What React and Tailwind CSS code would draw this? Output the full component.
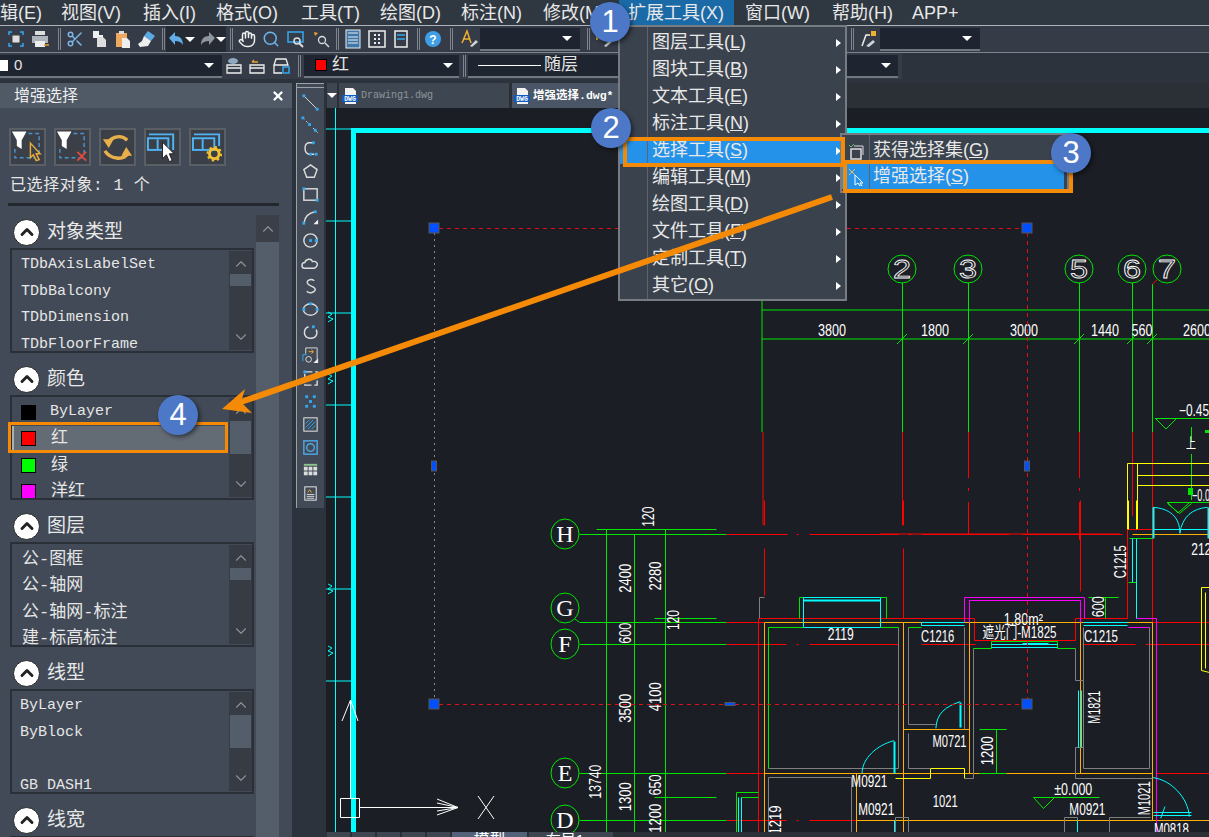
import React from 'react';
import { Scissors, Hand, Search, ChevronUp, ChevronDown, X } from 'lucide-react';

const BLUE = '#35a9f0';
const RED = '#ff0000';
const GREEN = '#00e600';
const ORANGE = '#ffb000';
const GRAY = '#808080';
const CYAN = '#00ffff';
const PINK = '#ff00ff';
const YELLOW = '#ffff00';

// drawing coords were read off a crop, map them back to page coords
const zx = (x) => 540 + x / 2.344;
const zy = (y) => 500 + y / 3;

const menus = [
    ['辑(E)', 'ml-0'], ['视图(V)', 'ml-[19px]'], ['插入(I)', 'ml-[22px]'], ['格式(O)', 'ml-[20px]'],
    ['工具(T)', 'ml-[23px]'], ['绘图(D)', 'ml-[20px]'], ['标注(N)', 'ml-[20px]'], ['修改(M)', 'ml-[21px]'],
];

const toolItems = ['图层工具', '图块工具', '文本工具', '标注工具', '选择工具', '编辑工具', '绘图工具', '文件工具', '定制工具', '其它'];
const toolKeys = ['L', 'B', 'E', 'N', 'S', 'M', 'D', 'F', 'T', 'O'];

const segs = [
    // red axis lines
    [RED, [[437, 103], [578, 103]]], [RED, [[600, 103], [605, 103]]], [RED, [[630, 103], [840, 103]]], [RED, [[862, 103], [870, 103]]],
    [RED, [[893, 103], [1100, 103]]], [RED, [[1130, 103], [1365, 103]]],
    [RED, [[437, 367], [1568, 367]]],
    [RED, [[437, 433], [577, 433]]], [RED, [[600, 433], [605, 433]]], [RED, [[630, 433], [840, 433]]], [RED, [[893, 433], [1020, 433]]],
    [RED, [[1270, 433], [1395, 433]]], [RED, [[1418, 433], [1568, 433]]],
    [RED, [[437, 820], [524, 820]]], [RED, [[1445, 820], [1568, 820]]],
    [RED, [[437, 961], [577, 961]]], [RED, [[600, 961], [605, 961]]], [RED, [[630, 961], [740, 961]]],
    [RED, [[524, 0], [524, 75]]], [RED, [[524, 143], [524, 285]]],
    [RED, [[850, 0], [850, 75]]], [RED, [[850, 145], [850, 355]]],
    [RED, [[1265, 0], [1265, 272]]], [RED, [[1435, 88], [1435, 367]]],
    [RED, [[512, 995], [512, 355], [1017, 355], [1017, 421], [1253, 421], [1253, 355], [1377, 355], [1377, 88], [1568, 88]]],
    // orange walls
    [ORANGE, [[524, 367], [1435, 367]]], [ORANGE, [[524, 367], [524, 995]]], [ORANGE, [[850, 367], [850, 995]]],
    [ORANGE, [[524, 820], [1435, 820]]], [ORANGE, [[740, 961], [1568, 961]]], [ORANGE, [[740, 820], [740, 995]]],
    [ORANGE, [[1435, 367], [1435, 961]]], [ORANGE, [[1265, 367], [1265, 820]]], [ORANGE, [[1005, 367], [1005, 820]]],
    [ORANGE, [[850, 688], [1005, 688]]], [ORANGE, [[1388, 103], [1568, 103]]],
    [YELLOW, [[831, 833], [913, 833], [913, 805], [995, 805], [995, 833]]],
    [YELLOW, [[1378, 0], [1378, 88]]], [YELLOW, [[1398, 0], [1398, 88]]],
    [YELLOW, [[1568, 260], [1550, 260], [1550, 510], [1568, 515]]], [YELLOW, [[1558, 275], [1558, 505]]],
    // gray inner lines
    [GRAY, [[840, 380], [840, 805], [534, 805]]], [GRAY, [[862, 380], [862, 673], [925, 673]]], [GRAY, [[862, 700], [862, 805], [913, 805]]],
    [GRAY, [[995, 380], [995, 688]]], [GRAY, [[1016, 445], [1016, 833], [995, 833]]],
    [GRAY, [[1253, 445], [1253, 540], [1273, 540], [1273, 380]]], [GRAY, [[1273, 740], [1253, 740], [1253, 833], [1435, 833]]],
    [GRAY, [[1273, 540], [1273, 805], [1427, 805], [1427, 380]]],
    [GRAY, [[524, 290], [513, 290], [513, 355]]], [GRAY, [[534, 995], [534, 832], [728, 832], [728, 995]]],
    [GRAY, [[1228, 995], [1228, 950], [1258, 950], [1258, 995]]], [GRAY, [[1334, 995], [1334, 950], [1430, 950]]],
    [GRAY, [[831, 995], [831, 950], [862, 950], [862, 995]]],
    // magenta
    [PINK, [[995, 367], [995, 290], [1275, 290], [1275, 355]]], [PINK, [[1005, 367], [1005, 301], [1265, 301], [1265, 367]]],
    [PINK, [[1378, 380], [1427, 380]]], [PINK, [[1398, 355], [1445, 355], [1445, 995]]],
    // green parts near windows
    [GREEN, [[608, 355], [608, 290], [810, 290], [810, 355]]], [GREEN, [[534, 805], [534, 380], [617, 380]]], [GREEN, [[798, 380], [840, 380]]],
    [GREEN, [[862, 380], [892, 380]]], [GREEN, [[1016, 445], [1056, 445], [1056, 423], [1213, 423], [1213, 445], [1253, 445]]],
    [GREEN, [[460, 995], [460, 877], [510, 877]]], [GREEN, [[472, 892], [510, 892]]], [GREEN, [[1380, 115], [1435, 115]]],
    [GREEN, [[1378, 247], [1398, 247]]], [GREEN, [[1030, 688], [1092, 688]]], [GREEN, [[1070, 688], [1070, 820]]], [GREEN, [[1030, 820], [1092, 820]]],
    [GREEN, [[1285, 290], [1355, 290]]], [GREEN, [[1325, 290], [1325, 355]]],
    [GREEN, [[1155, 892], [1310, 892]]], [GREEN, [[1155, 892], [1180, 925], [1205, 892]]], [GREEN, [[1470, 8], [1497, 40], [1525, 8]]],
    // cyan windows and doors
    [CYAN, [[617, 380], [617, 290], [798, 290], [798, 380], [617, 380]]], [CYAN, [[617, 300], [798, 300]], 2],
    [CYAN, [[892, 365], [995, 365]]], [CYAN, [[892, 376], [995, 376]]], [CYAN, [[892, 365], [892, 376]]],
    [CYAN, [[1273, 365], [1377, 365]]], [CYAN, [[1273, 376], [1377, 376]]],
    [CYAN, [[1056, 433], [1213, 433]]], [CYAN, [[1056, 440], [1213, 440]]], [CYAN, [[1130, 428], [1190, 428]]],
    [CYAN, [[985, 605], [985, 680]], 2], [CYAN, [[830, 722], [830, 820]], 2], [CYAN, [[1262, 570], [1262, 740]]], [CYAN, [[1268, 570], [1268, 740]]],
    [CYAN, [[463, 892], [463, 995]]], [CYAN, [[472, 892], [472, 995]]], [CYAN, [[1388, 115], [1388, 247]]], [CYAN, [[1398, 115], [1398, 355]]],
    [CYAN, [[1437, 22], [1437, 115]], 2], [CYAN, [[1565, 22], [1565, 115]], 2], [CYAN, [[1437, 88], [1568, 88]]],
    [CYAN, [[1437, 936], [1525, 936]]], [CYAN, [[1437, 945], [1525, 945]]], [CYAN, [[830, 961], [830, 995]]], [CYAN, [[1258, 961], [1258, 995]]],
    // left dimension lines
    [GREEN, [[92, 103], [437, 103]]], [GREEN, [[92, 367], [437, 367]]], [GREEN, [[92, 433], [437, 433]]], [GREEN, [[92, 820], [437, 820]]], [GREEN, [[92, 961], [437, 961]]],
    [GREEN, [[154, 88], [154, 995]]], [GREEN, [[221, 103], [221, 995]]], [GREEN, [[292, 88], [292, 995]]],
    [GREEN, [[132, 88], [412, 88]]], [GREEN, [[268, 355], [412, 355]]], [GREEN, [[268, 892], [412, 892]]],
];

const arcs = [
    'M985 605 C950 620 930 640 928 685',
    'M830 722 C790 735 755 775 755 820',
    'M1437 833 C1480 840 1520 895 1522 950',
    'M1437 22 C1475 25 1500 50 1500 100 C1505 50 1530 25 1565 22',
    'M1465 920 L1455 955',
];

const cadTexts = [
    ['2119', 705, 402, 26], ['C1216', 932, 410, 33], ['1.80m²', 1133, 357, 39], ['遮光门-M1825', 1124, 397, 74], ['C1215', 1315, 408, 34],
    ['M0721', 960, 723, 34], ['M0921', 772, 843, 36], ['M0921', 788, 927, 36], ['1021', 950, 905, 25], ['±0.000', 1250, 868, 38],
    ['M0921', 1283, 927, 36], ['212', 1550, 148, 20], ['M0818', 1480, 988, 35],
    ['120', 255, 50, 20, 1], ['2400', 200, 235, 29, 1], ['2280', 270, 228, 29, 1], ['120', 313, 360, 20, 1], ['600', 200, 400, 21, 1],
    ['3500', 200, 625, 29, 1], ['4100', 270, 590, 29, 1], ['13740', 130, 845, 34, 1], ['1300', 200, 890, 29, 1], ['650', 270, 855, 21, 1],
    ['1200', 270, 955, 29, 1], ['1200', 1048, 752, 29, 1], ['M1821', 1300, 622, 33, 1], ['M1021', 1417, 895, 34, 1], ['1219', 552, 960, 29, 1],
    ['600', 1310, 320, 21, 1], ['C1215', 1360, 185, 33, 1],
];

const topAxes = [['2', 902, 902], ['3', 968, 968], ['5', 1079, 1079], ['6', 1132, 1132], ['7', 1167, 1152]];
const sideAxes = [['H', 534], ['G', 608], ['F', 644], ['E', 773], ['D', 820]];

const Cad = ({ x, y, w, rot, size = 16, children }) => (
    <text
        x={x}
        y={y}
        fill="#fff"
        fontSize={size}
        textAnchor="middle"
        dominantBaseline="central"
        textLength={w}
        lengthAdjust="spacingAndGlyphs"
        transform={rot ? `rotate(-90 ${x} ${y})` : undefined}
    >
        {children}
    </text>
);

const Grip = ({ x, y, w = 10, h = 10 }) => (
    <rect x={x - w / 2} y={y - h / 2} width={w} height={h} fill="#0050ff" stroke="#555" strokeWidth="1" />
);

const Drawing = () => (
    <svg viewBox="326 108 883 724" className="block h-[724px] w-[883px]" fontFamily="'Liberation Sans','Noto Sans CJK SC',sans-serif">
        {/* frame and left ruler */}
        {[129, 221, 313, 405, 497, 589, 681].map((y) => (
            <line key={y} x1="326" x2="351" y1={y} y2={y} stroke={CYAN} />
        ))}
        <line x1="335.5" x2="335.5" y1="108" y2="832" stroke={CYAN} />
        <path d="M353.5 832V130.5H1209" fill="none" stroke={CYAN} strokeWidth="5" />
        {[318, 380, 590, 652].map((y) => (
            <path key={y} d={`M328 ${y - 6}l4 2-4 3 5 2-5 3`} fill="none" stroke={CYAN} />
        ))}

        {/* top axes */}
        <path d="M762 298V432M762 310H1209M762 339H1209" stroke={GREEN} fill="none" />
        <path d="M763 432V525" stroke={RED} fill="none" />
        {topAxes.map(([label, cx, lx]) => (
            <g key={label}>
                <circle cx={cx} cy="269" r="14" fill="none" stroke={GREEN} />
                <path d={`M${lx + 0.5} ${lx === 1152 ? 284 : 283}V432`} stroke={GREEN} fill="none" />
                <path d={`M${lx - 5} 344l10-10`} stroke={GREEN} fill="none" />
                <text
                    x={cx}
                    y={269}
                    fontSize="26"
                    textAnchor="middle"
                    dominantBaseline="central"
                    textLength="18"
                    lengthAdjust="spacingAndGlyphs"
                    fill="none"
                    stroke="#fff"
                    strokeWidth="0.8"
                >
                    {label}
                </text>
            </g>
        ))}
        <path d="M1152.500 284L1157 280M902.500 432V525M968.500 432V478M968.500 488V491M968.500 502V535M1079.500 432V478M1079.500 488V491M1079.500 502V540M1132.500 432V516M1152.500 432V530" stroke={RED} fill="none" />
        <path d="M880 534H1120" stroke={RED} />
        {[['3800', 832, 28], ['1800', 935, 28], ['3000', 1024, 28], ['1440', 1105, 28], ['560', 1142, 21], ['2600', 1197, 28]].map(([t, x, w]) => (
            <Cad key={t} x={x} y={330} w={w}>{t}</Cad>
        ))}

        {/* upper right details */}
        <path d="M1155 418.500H1209M1155 418L1166 429L1177 418M1191.500 427V442M1191.500 454V500M1167 502.500H1209M1167 502L1178 513L1190 502" stroke={GREEN} fill="none" />
        <rect x="1188" y="488" width="5" height="7" fill={GREEN} />
        <rect x="1205" y="430" width="4" height="3" fill={GREEN} />
        <Cad x={1194} y={410} w={30}>−0.45</Cad>
        <Cad x={1191} y={443} w={10} size={14}>上</Cad>
        <Cad x={1201} y={495} w={18}>−0.0</Cad>
        <path d="M1127.500 529V463.500H1209M1137.500 463V529M1137 475.500H1209M1137 485.500H1209M1127 529.500H1153" stroke={YELLOW} fill="none" />

        {/* building plan */}
        {segs.map(([color, pts, width], i) => (
            <polyline
                key={i}
                points={pts.map(([x, y]) => `${Math.round(zx(x)) + 0.5},${Math.round(zy(y)) + 0.5}`).join(' ')}
                fill="none"
                stroke={color}
                strokeWidth={width || 1}
            />
        ))}
        <g transform="translate(540 500) scale(0.4266 0.3333)">
            {arcs.map((d) => (
                <path key={d} d={d} fill="none" stroke={CYAN} strokeWidth="1" vectorEffect="non-scaling-stroke" />
            ))}
        </g>
        {cadTexts.map(([t, x, y, w, rot], i) => (
            <Cad key={i} x={zx(x)} y={zy(y)} w={w} rot={rot}>{t}</Cad>
        ))}

        {/* side axes */}
        {sideAxes.map(([label, y]) => (
            <g key={label}>
                <ellipse cx="565" cy={y} rx="14" ry="15" fill="#1b1e24" stroke={GREEN} />
                <text x="565" y={y} fill="#fff" fontSize="24" textAnchor="middle" dominantBaseline="central" fontFamily="'Liberation Serif',serif">{label}</text>
            </g>
        ))}
        <path d="M575 619L579 622" stroke={GREEN} />

        {/* selection grips */}
        <path d="M439 228.500H1022M439 704.500H1022M1027.500 233V700" stroke="#e01010" strokeDasharray="4 4" fill="none" />
        <path d="M434.500 233V700" stroke="#8a8a8a" strokeDasharray="2 4" fill="none" />
        <Grip x={434} y={228} /><Grip x={1027} y={228} /><Grip x={434} y={704} /><Grip x={1027} y={704} />
        <Grip x={434} y={466} w={5} h={10} /><Grip x={1027} y={466} w={5} h={10} /><Grip x={730} y={704} w={10} h={3} />

        {/* ucs icon */}
        <path d="M350.500 798V700M342 721L350.500 700L358 721M340.500 798.500H359.500V817.500H340.500ZM360 807.500H458M437 799L458 807.500L437 815M437 803L458 807.500L437 811M478 796L494 819M494 796L478 819" stroke="#fff" fill="none" />
    </svg>
);

const ToolIcon = ({ children, className = 'mx-[1px]' }) => (
    <div className={`flex h-[22px] w-[22px] items-center justify-center ${className}`}>
        <svg viewBox="0 0 20 20" className="h-[20px] w-[20px]" fill="none">{children}</svg>
    </div>
);

const Sep = ({ className = 'mx-[3px]' }) => (
    <div className={`h-[22px] w-[3px] border-x border-[#7d848d] ${className}`} />
);

const Caret = ({ className = '' }) => (
    <span className={`h-0 w-0 border-x-[5px] border-t-[5px] border-x-transparent border-t-white ${className}`} />
);

const Combo = ({ className, children }) => (
    <div className={`flex h-[23px] items-center border-b-2 border-[#70777f] bg-[#1f2530] ${className}`}>
        {children}
    </div>
);

const ToolbarOne = () => (
    <div className="flex h-[27px] border-b border-[#7d848d] bg-[#353c47] pl-[4px]">
        <div className="flex w-[983px] items-center">
            <ToolIcon><path d="M3 6V3h3M14 3h3v3M17 14v3h-3M6 17H3v-3" stroke={BLUE} strokeWidth="1.500" /><rect x="6.500" y="6.500" width="7" height="7" fill="#ddd" /></ToolIcon>
            <ToolIcon><rect x="5" y="2" width="10" height="4" fill="#ddd" /><rect x="2" y="7" width="16" height="7" fill="#aeb4bb" /><rect x="5" y="12" width="10" height="6" fill="#eee" /><path d="M14 16h5" stroke="#f0a030" strokeWidth="1.500" /></ToolIcon>
            <Sep className="ml-[6px] mr-[2px]" />
            <div className="mx-[1px] flex w-[22px] justify-center"><Scissors size={18} color="#7db4e4" /></div>
            <ToolIcon><path d="M4 2h6v4h4v6h-6V9H4z" fill="#eee" /><path d="M8 8h6l3 3v7H8z" fill="#ddd" /></ToolIcon>
            <ToolIcon><path d="M3 4h11v14H3z" fill="#efa860" /><rect x="6" y="2" width="5" height="3" fill="#ddd" /><path d="M9 9h5l3 3v7H9z" fill="#eee" /></ToolIcon>
            <ToolIcon><path d="M11 2l7 5-4 5-7-5z" fill="#5aa9e6" /><path d="M7 7l7 5-3 5-8 1-2-3 4-3z" fill="#eee" /></ToolIcon>
            <Sep className="ml-[3px] mr-[1px]" />
            <div className="flex h-[26px] w-[60px] items-center bg-[#242932]">
                <ToolIcon className="ml-[0px]"><path d="M3 9l6-6v4c5 0 8 3 8 9-2-3-4-4-8-4v4z" fill="#62ace8" /></ToolIcon>
                <Caret className="ml-[-2px]" />
                <ToolIcon className="ml-[3px]"><path d="M17 9l-6-6v4c-5 0-8 3-8 9 2-3 4-4 8-4v4z" fill="#8f959c" /></ToolIcon>
                <Caret className="ml-[-2px]" />
            </div>
            <Sep className="ml-[4px] mr-[2px]" />
            <div className="mx-[1px] flex w-[22px] justify-center"><Hand size={18} color="#eee" /></div>
            <div className="mx-[1px] flex w-[22px] justify-center"><Search size={18} color="#6cb4ec" /></div>
            <ToolIcon className="mx-[2px]"><rect x="2" y="3" width="15" height="10" stroke={BLUE} strokeWidth="1.500" /><circle cx="11" cy="12" r="3" stroke="#ddd" strokeWidth="1.500" /><path d="M13 14l4 4" stroke="#ddd" strokeWidth="2" /></ToolIcon>
            <ToolIcon className="mx-[1px]"><path d="M3 3l4 1-3 3z" fill="#f0a030" /><circle cx="11" cy="11" r="3.500" stroke="#ddd" strokeWidth="1.300" /><path d="M14 14l4 4" stroke="#ddd" strokeWidth="1.500" /></ToolIcon>
            <Sep className="ml-[3px] mr-[2px]" />
            <ToolIcon className="mx-[1px]"><rect x="3" y="1" width="14" height="18" fill="#3f78a8" stroke="#eee" /><path d="M5 4h10M5 8h10M5 11h10M5 14h10" stroke="#eee" /></ToolIcon>
            <ToolIcon className="mx-[1px]"><rect x="2" y="2" width="16" height="16" stroke="#eee" strokeWidth="1.500" /><path d="M7 6h2M11 6h2M7 10h2M11 10h2M7 14h2M11 14h2" stroke="#eee" strokeWidth="2" /></ToolIcon>
            <ToolIcon className="mx-[1px]"><path d="M4 2h12v16H4z" stroke="#eee" strokeWidth="1.500" /><path d="M6 6h8M6 10h8" stroke={BLUE} strokeWidth="1.500" /></ToolIcon>
            <Sep className="ml-[4px] mr-[1px]" />
            <ToolIcon><circle cx="10" cy="10" r="8" fill="#3f9fe6" /><text x="10" y="14.500" fontSize="12" fontWeight="700" fill="#fff" textAnchor="middle">?</text></ToolIcon>
            <Sep className="ml-[5px] mr-[2px]" />
            <ToolIcon className="ml-[3px]"><path d="M3 14L8 2l4 12M5 10h6" stroke="#f0b030" strokeWidth="1.500" /><path d="M11 17l6-6 2 2-6 5z" fill="#cfd3d8" /></ToolIcon>
            <Combo className="ml-[0px] w-[100px] justify-end pr-[8px]"><Caret /></Combo>
            <Sep className="ml-[7px] mr-[1px]" />
            <ToolIcon><path d="M4 3v8" stroke="#f0b030" strokeWidth="1.500" /><path d="M11 17l6-6 2 2-6 5z" fill="#cfd3d8" /></ToolIcon>
            <div className="w-[236px] shrink-0" />
            <Sep className="mr-[2px]" />
            <ToolIcon className="ml-[2px]"><path d="M3 17l4-11h4" stroke="#eee" strokeWidth="1.500" /><rect x="12" y="2" width="5" height="5" fill="#f0b030" /><path d="M7 17l7-6 2 2-6 5z" fill="#cfd3d8" /></ToolIcon>
            <Combo className="w-[100px] justify-end pr-[8px]"><Caret /></Combo>
        </div>
    </div>
);

const ToolbarTwo = () => (
    <div className="flex h-[26px]">
        <div className="flex w-[902px] items-center bg-[#353c47]">
            <Combo className="w-[222px] pr-[8px] text-[15px] text-[#e5e5e5]">
                <span className="h-[11px] w-[8px] bg-white" />
                <span className="ml-[6px] flex-1">0</span>
                <Caret />
            </Combo>
            <ToolIcon className="ml-[1px]"><path d="M3 9h14v8H3zM3 12h14" stroke="#eee" strokeWidth="1.300" /><ellipse cx="9" cy="5" rx="5" ry="3" fill="#8fa8c0" /></ToolIcon>
            <ToolIcon className="mx-[1px]"><path d="M3 9h14v8H3zM3 12h14" stroke="#eee" strokeWidth="1.300" /><path d="M5 6h6M5 6l2-2" stroke="#f0a030" strokeWidth="1.300" /></ToolIcon>
            <ToolIcon className="mx-[1px]"><path d="M5 3h10l2 6H3zM3 9v8h8" stroke="#eee" strokeWidth="1.300" /><rect x="12" y="11" width="6" height="6" stroke={BLUE} strokeWidth="1.500" /></ToolIcon>
            <Sep className="ml-[5px] mr-[3px]" />
            <Combo className="w-[155px] pl-[11px] pr-[6px] text-[17px] text-[#e5e5e5]">
                <span className="h-[12px] w-[12px] border border-black bg-[#ff0000]" />
                <span className="ml-[5px] flex-1">红</span>
                <Caret />
            </Combo>
            <Sep className="ml-[4px] mr-[2px]" />
            <Combo className="flex-1 pl-[10px] pr-[7px] text-[17px] text-[#e5e5e5]">
                <span className="h-px w-[63px] bg-white" />
                <span className="ml-[3px] flex-1">随层</span>
                <Caret />
            </Combo>
            <div className="w-[4px]" />
        </div>
    </div>
);

const PanelButton = ({ children }) => (
    <div className="flex h-[38px] w-[37px] items-center justify-center border-2 border-[#5a5f66] bg-[#3b3f47]">
        <svg viewBox="0 0 34 34" className="h-[34px] w-[34px]" fill="none">{children}</svg>
    </div>
);

const funnel = <path d="M1 1h15l-5 9v9l-5-3v-6z" fill="#fff" />;
const dashed = <path d="M18 3h11v24M27 28H4V16" stroke="#4b93cc" strokeWidth="1.500" strokeDasharray="4 3" />;

const PanelButtons = () => (
    <div className="flex gap-[8px] pl-[9px]">
        <PanelButton>{dashed}{funnel}<path d="M20 13l10 11h-4l3 6-3 1-3-6-3 3z" fill="#3b3f47" stroke="#e8ad3d" strokeWidth="1.500" /></PanelButton>
        <PanelButton>{dashed}{funnel}<path d="M22 22l9 9M31 22l-9 9" stroke="#e04a3c" strokeWidth="2" /></PanelButton>
        <PanelButton>
            <path d="M7 14C9 7 20 3 27 10M4 21c5 8 19 11 24 2" stroke="#e8b04a" strokeWidth="3.500" />
            <path d="M2 9h11l-5 9zM32 26H21l5-9z" fill="#e8b04a" />
        </PanelButton>
        <PanelButton>
            <path d="M3 4h25v16" stroke="#4fb4f5" strokeWidth="2" /><rect x="2" y="8" width="21" height="12" stroke="#4fb4f5" strokeWidth="2" /><path d="M12 9v10" stroke="#4fb4f5" strokeWidth="2" />
            <path d="M17 12l12 12h-5l3 7-3 1-3-7-4 4z" fill="#fff" stroke="#222" />
        </PanelButton>
        <PanelButton>
            <path d="M3 4h26v12" stroke="#4fb4f5" strokeWidth="2" /><rect x="2" y="8" width="22" height="12" stroke="#4fb4f5" strokeWidth="2" /><path d="M12 9v10" stroke="#4fb4f5" strokeWidth="2" />
            <circle cx="24" cy="24" r="5" stroke="#f2c230" strokeWidth="3" /><circle cx="24" cy="24" r="7" stroke="#f2c230" strokeWidth="2" strokeDasharray="2.500 3" />
        </PanelButton>
    </div>
);

const sections = [
    { title: '对象类型', thumb: 'mt-[1px] h-[12px]', pl: 'pl-[9px] text-[15px]', rows: ['TDbAxisLabelSet', 'TDbBalcony', 'TDbDimension', 'TDbFloorFrame'] },
    { title: '颜色', thumb: 'mt-[1px] h-[33px]', pl: 'pl-[9px]', rows: [['ByLayer', '#000000'], ['红', '#ff0000'], ['绿', '#00ff00'], ['洋红', '#ff00ff']] },
    { title: '图层', thumb: 'mt-[1px] h-[12px]', pl: 'pl-[10px] text-[17px]', rows: ['公-图框', '公-轴网', '公-轴网-标注', '建-标高标注'] },
    { title: '线型', thumb: 'mt-[1px] h-[33px]', pl: 'pl-[8px] text-[15px]', rows: ['ByLayer', 'ByBlock', '', 'GB DASH1'] },
    { title: '线宽', thumb: 'mt-[1px] h-[12px]', pl: 'pl-[8px] text-[15px]', rows: [] },
];

const ListRow = ({ row, pl }) => {
    if (Array.isArray(row)) {
        const picked = row[0] === '红';
        return (
            <div className={`flex h-[26.500px] items-center text-[15px] ${picked ? 'border-l-2 border-[#aab0b6] bg-[#636b75] pl-[7px]' : 'pl-[9px]'}`}>
                <span className="h-[15px] w-[15px] shrink-0 border border-black" style={{ backgroundColor: row[1] }} />
                <span className={row[0] === 'ByLayer' ? 'ml-[14px]' : 'ml-[15px] text-[17px]'}>{row[0]}</span>
            </div>
        );
    }
    return <div className={`flex h-[26.500px] items-center ${pl}`}>{row}</div>;
};

const Section = ({ section }) => (
    <div className="h-[147px] pl-[10px]">
        <div className="flex h-[31px] items-center pb-[1px] pl-[3px]">
            <span className="flex h-[27px] w-[27px] items-center justify-center rounded-full border border-[#222] bg-white">
                <ChevronUp size={20} strokeWidth={3.500} color="#222" />
            </span>
            <span className="ml-[7px] pt-[2px] text-[19px] leading-none text-[#e8e8e8]">{section.title}</span>
        </div>
        <div className="flex h-[105px] w-[244px] border-2 border-[#2b3038] text-[#e6e6e6]">
            <div className="w-[217px] overflow-hidden pt-[2px]">
                {section.rows.map((row, i) => (
                    <ListRow key={i} row={row} pl={section.pl} />
                ))}
            </div>
            <div className="my-[1px] ml-[1px] flex w-[23px] flex-col items-center bg-[#363b44]">
                <ChevronUp size={18} strokeWidth={1.500} color="#8b9199" className="mt-[4px]" />
                <div className={`w-[21px] bg-[#535e6a] ${section.thumb}`} />
                <div className="flex-1" />
                <ChevronDown size={18} strokeWidth={1.500} color="#8b9199" className="mb-[4px]" />
            </div>
        </div>
    </div>
);

const LeftPanel = () => (
    <div className="flex h-[754px] w-[292px] shrink-0 flex-col overflow-hidden bg-[#414a56]">
        <div className="flex h-[25px] shrink-0 items-center justify-between bg-[#4f5a66] pl-[14px] pr-[7px] text-[16px] text-[#eeeeee]">
            <span>增强选择</span>
            <X size={14} strokeWidth={4} color="#fff" />
        </div>
        <div className="h-[20px] shrink-0" />
        <PanelButtons />
        <div className="mt-[10px] h-[20px] shrink-0 pl-[10px] font-['Liberation_Mono','Noto_Sans_CJK_SC',monospace] text-[16px] leading-[20px] tracking-[0.6px] text-[#e6e6e6]">
            已选择对象: 1 个
        </div>
        <div className="ml-[8px] mt-[7px] h-[3px] w-[271px] shrink-0 bg-[#23272e]" />
        <div className="mt-[9px] flex">
            <div className="w-[256px] pt-[2px] font-['Liberation_Mono','Noto_Sans_CJK_SC',monospace]">
                {sections.map((s) => (
                    <Section key={s.title} section={s} />
                ))}
            </div>
            <div className="flex h-[623px] w-[23px] flex-col items-center bg-[#535e6a]">
                <div className="flex h-[27px] w-full items-center justify-center bg-[#3a3f48]">
                    <ChevronUp size={18} strokeWidth={1.500} color="#8b9199" />
                </div>
            </div>
        </div>
    </div>
);

const Dot = ({ x, y }) => <rect x={x - 1.500} y={y - 1.500} width="3" height="3" fill={BLUE} />;

const sideIcons = [
    <><path d="M3 3l14 14" stroke="#ddd" /><Dot x={3} y={3} /><Dot x={17} y={17} /></>,
    <><path d="M2 2l16 16" stroke="#ddd" strokeDasharray="2 3" /><Dot x={2} y={2} /><Dot x={9} y={9} /><Dot x={15} y={15} /></>,
    <><path d="M13 4H8C3 5 3 14 8 16h6" stroke="#ddd" strokeWidth="1.500" /><Dot x={13} y={4} /><Dot x={10} y={16} /><Dot x={16} y={16} /></>,
    <path d="M10 3l7 5-3 8H6L3 8z" stroke="#ddd" strokeWidth="1.500" />,
    <><rect x="3" y="4" width="14" height="12" stroke="#ddd" strokeWidth="1.500" /><Dot x={3} y={4} /><Dot x={17} y={16} /></>,
    <><path d="M3 16C4 9 9 5 15 4" stroke="#ddd" strokeWidth="1.500" /><Dot x={3} y={16} /><Dot x={15} y={4} /><path d="M13 17l5-5v5z" fill="#eee" /></>,
    <><circle cx="10" cy="10" r="7" stroke="#ddd" strokeWidth="1.500" /><Dot x={10} y={10} /><Dot x={16} y={10} /></>,
    <path d="M4 15a3 3 0 010-6c1-4 7-5 8-1 4-1 6 2 5 4s-2 3-3 3z" stroke="#ddd" strokeWidth="1.500" />,
    <path d="M14 4c-4-3-9 0-7 3s8 3 8 6-6 5-9 2" stroke="#ddd" strokeWidth="1.500" />,
    <><ellipse cx="10" cy="10" rx="7.500" ry="6" stroke="#ddd" strokeWidth="1.500" /><Dot x={10} y={4} /><Dot x={3} y={10} /><Dot x={17} y={10} /></>,
    <><path d="M8 4C2 6 2 15 9 16s9-5 7-9" stroke="#ddd" strokeWidth="1.500" /><Dot x={13} y={4} /></>,
    <><path d="M5 8V2h12v12" stroke="#ddd" /><path d="M8 6h5M11 4l2 2-2 2" stroke="#f0b030" /><circle cx="8" cy="14" r="3" stroke="#ddd" /><path d="M2 9h4M2 9v7" stroke={BLUE} /><path d="M13 18l5-5v5z" fill="#eee" /></>,
    <><rect x="4" y="3" width="13" height="14" stroke="#ddd" strokeWidth="1.500" strokeDasharray="8 3" /><Dot x={4} y={3} /></>,
    <><Dot x={6} y={5} /><Dot x={14} y={5} /><Dot x={10} y={10} /><Dot x={6} y={15} /><Dot x={14} y={15} /></>,
    <><rect x="3" y="3" width="14" height="14" stroke="#eee" /><path d="M5 13l8-8M7 15l8-8M5 9l4-4M11 15l4-4" stroke={BLUE} /></>,
    <><rect x="3" y="3" width="14" height="14" stroke="#4fa8e8" strokeWidth="1.500" /><circle cx="10" cy="10" r="4" stroke="#4fa8e8" strokeWidth="1.500" /></>,
    <><rect x="3" y="3" width="14" height="2" fill="#8ac48a" /><path d="M3 6h4v4H3zM8 6h4v4H8zM13 6h4v4h-4zM3 11h4v4H3zM8 11h4v4H8zM13 11h4v4h-4z" fill="#ddd" /></>,
    <><rect x="4" y="3" width="12" height="14" stroke="#eee" /><path d="M7 9l2-3 2 3" stroke="#f0b030" /><path d="M6 11h8M6 13h8M6 15h8" stroke="#ddd" /></>,
];

const SideToolbar = () => (
    <div className="h-[425px] w-[28px] shrink-0 border-l border-[#9aa1a8] bg-[#414a56]">
        <div className="h-[5px] border-y border-[#9aa1a8]" />
        <div className="flex flex-col items-center gap-[4px] pt-[5px]">
            {sideIcons.map((icon, i) => (
                <svg key={i} viewBox="0 0 20 20" className="h-[19px] w-[19px]" fill="none">{icon}</svg>
            ))}
        </div>
    </div>
);

const DwgIcon = () => (
    <svg viewBox="0 0 16 16" className="h-[16px] w-[16px] shrink-0">
        <path d="M3 0h8l3 3v13H3z" fill="#f2f2f2" />
        <rect x="0" y="7" width="16" height="7" fill="#0f5cc0" />
        <text x="8" y="13" fontSize="6.500" fontWeight="700" fill="#fff" textAnchor="middle">DWG</text>
    </svg>
);

const TabBar = () => (
    <div className="flex h-[25px] shrink-0 bg-[#2b2f36] font-['Liberation_Mono','Noto_Sans_CJK_SC',monospace]">
        <div className="ml-[1px] flex w-[10px] items-center justify-center bg-[#3e4651]"><Caret /></div>
        <div className="ml-[2px] flex w-[170px] items-center gap-[3px] bg-[#3e4651] pl-[3px] text-[10px] text-[#8f959c]">
            <DwgIcon />Drawing1.dwg
        </div>
        <div className="ml-[3px] flex w-[108px] items-center gap-[3px] bg-[#4a5566] pl-[2px] text-[11.500px] font-bold text-white">
            <DwgIcon />增强选择.dwg*
        </div>
    </div>
);

const BottomTabs = () => (
    <div className="flex h-[5px] gap-[2px] overflow-hidden bg-[#2b2f36] pl-[1px]">
        {['', '', '', '', ''].map((_, i) => (
            <div key={i} className="w-[23px] bg-[#3e4651]" />
        ))}
        <div className="w-[75px] bg-[#536278] text-center text-[16px] leading-[16px] text-white">模型</div>
        <div className="w-[84px] bg-[#3e4651] pr-[12px] text-center text-[15px] leading-[15px] text-white">布局1</div>
    </div>
);

const FlyoutRow = ({ label, keyName, active, arrow }) => (
    <div className={`flex h-[27px] items-center pl-[32px] text-[18px] text-[#e8e8e8] ${active ? 'bg-[#2492e8]' : ''}`}>
        <span className="flex-1">{label}(<u>{keyName}</u>)</span>
        {arrow && <span className="mr-[4px] h-0 w-0 border-y-[4px] border-l-[5px] border-y-transparent border-l-white" />}
    </div>
);

const ToolsMenu = () => (
    <div className="absolute left-[618px] top-[25px] h-[276px] w-[229px] border-2 border-[#777c83] bg-[#3a424d] py-[2px]">
        <div className="absolute bottom-0 left-[27px] top-0 w-px bg-[#5e646c]" />
        {toolItems.map((item, i) => (
            <FlyoutRow key={item} label={item} keyName={toolKeys[i]} active={i === 4} arrow />
        ))}
    </div>
);

const SubMenu = () => (
    <div className="absolute left-[840px] top-[133px] h-[60px] w-[229px] border-2 border-[#777c83] bg-[#3a424d] py-[2px] pr-[3px]">
        <div className="absolute bottom-0 left-[27px] top-0 w-px bg-[#5e646c]" />
        <div className="flex h-[27px] items-center text-[18px] text-[#e8e8e8]">
            <svg viewBox="0 0 18 18" className="ml-[6px] h-[18px] w-[18px]" fill="none"><rect x="3" y="7" width="10" height="10" stroke="#ddd" strokeWidth="1.500" /><path d="M6 4h9v9" stroke="#ddd" /><path d="M1 3l2 2 3-3" stroke="#6fbf6f" /></svg>
            <span className="ml-[7px]">获得选择集(<u>G</u>)</span>
        </div>
        <div className="flex h-[25px] items-center bg-[#2492e8] text-[18px] text-[#e8e8e8]">
            <svg viewBox="0 0 18 18" className="ml-[6px] h-[18px] w-[18px]" fill="none"><path d="M1 1l6 6M7 1L1 7" stroke="#e8c070" /><path d="M7 7l8 8h-3l2 3-2 0-2-3-3 2z" stroke="#fff" /></svg>
            <span className="ml-[7px]">增强选择(<u>S</u>)</span>
        </div>
    </div>
);

const Badge = ({ n, className }) => (
    <div className={`absolute flex h-[40px] w-[40px] items-center justify-center rounded-full bg-[#4d78c8] text-[31px] text-white shadow-[2px_2px_4px_rgba(0,0,0,0.5)] ${className}`}>
        {n}
    </div>
);

export default function App() {
    return (
        <div className="relative flex h-[837px] w-[1209px] flex-col overflow-hidden bg-[#2d333c] font-['Liberation_Sans','Noto_Sans_CJK_SC',sans-serif]">
            {/* menu bar */}
            <div className="flex h-[26px] shrink-0 items-center border-b border-[#aeb3b9] bg-[#2f3741] text-[18px] leading-none text-[#e8e8e8]">
                {menus.map(([label, cls]) => (
                    <span key={label} className={cls}>{label}</span>
                ))}
                <span className="ml-[13px] flex h-[25px] w-[115px] items-center bg-[#1b6aa8] pl-[9px]">扩展工具(X)</span>
                <span className="ml-[11px]">窗口(W)</span>
                <span className="ml-[22px]">帮助(H)</span>
                <span className="ml-[19px]">APP+</span>
            </div>
            <ToolbarOne />
            <ToolbarTwo />
            <div className="h-[4px] shrink-0" />

            <div className="flex min-h-0 flex-1">
                <LeftPanel />
                <div className="w-[4px] shrink-0" />
                <SideToolbar />
                <div className="ml-[2px] flex w-[883px] flex-col">
                    <TabBar />
                    <div className="h-[724px] bg-[#1b1e24]">
                        <Drawing />
                    </div>
                    <BottomTabs />
                </div>
            </div>

            <ToolsMenu />
            <SubMenu />

            {/* orange callouts */}
            <div className="absolute left-[623px] top-[137px] h-[30px] w-[222px] border-[4px] border-[#f58a07]" />
            <div className="absolute left-[843px] top-[160px] h-[33px] w-[230px] border-[4px] border-[#f58a07]" />
            <div className="absolute left-[8px] top-[422px] h-[31px] w-[220px] border-[3px] border-[#f58a07]" />
            <svg viewBox="0 0 1209 837" className="pointer-events-none absolute left-0 top-0 h-[837px] w-[1209px]">
                <path d="M832 197L238 403" stroke="#f58a07" strokeWidth="6" fill="none" />
                <path d="M222 409L245 389L241 402L252 413z" fill="#f58a07" />
            </svg>

            <Badge n="1" className="left-[590px] top-[2px]" />
            <Badge n="2" className="left-[591px] top-[108px]" />
            <Badge n="3" className="left-[1051px] top-[133px]" />
            <Badge n="4" className="left-[158px] top-[395px]" />
        </div>
    );
}
